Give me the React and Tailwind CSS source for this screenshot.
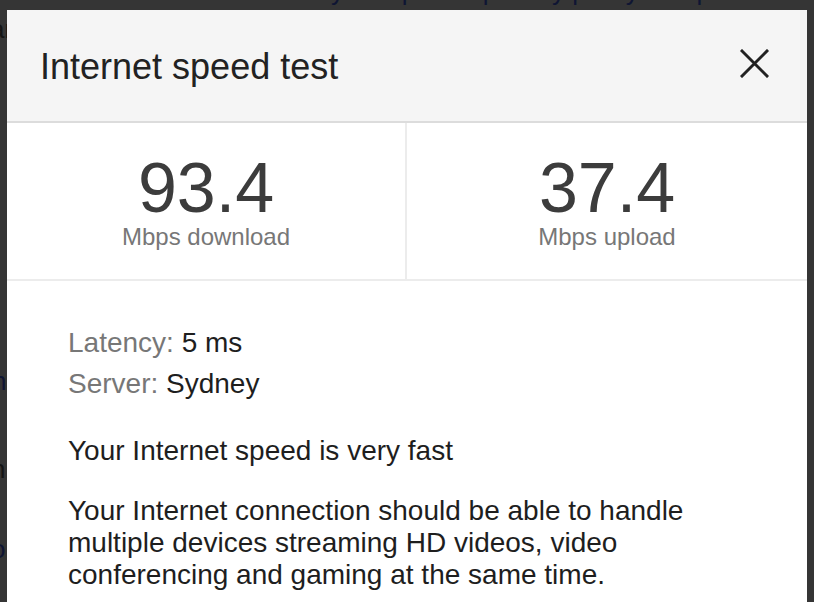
import { useState } from "react";

const SPEEDS = [
  { value: "93.4", label: "Mbps download" },
  { value: "37.4", label: "Mbps upload" },
];

function CloseIcon() {
  return (
    <svg width="29" height="29" viewBox="0 0 29 29" fill="none">
      <path d="M2 2L27 27M27 2L2 27" stroke="#222" strokeWidth="3" strokeLinecap="square" />
    </svg>
  );
}

export default function App() {
  const [open, setOpen] = useState(true);

  return (
    <div
      className="relative h-[602px] w-[814px] overflow-hidden bg-[#353535]"
      style={{ fontFamily: '"Liberation Sans", Arial, sans-serif' }}
    >
      {/* page behind the overlay */}
      <div className="flex flex-col text-[26px] leading-[38px] text-[#141414]">
        <div className="-mt-[28px] pl-[250px] text-[#0f1533]">
          Check your speed · privacy policy · help
        </div>
        <div className="-ml-[10px] whitespace-nowrap">
          an internet speed test measures the connection between your device
        </div>
        <div className="-ml-[14px] whitespace-nowrap">e</div>
        <div className="mt-[276px] flex items-center justify-between">
          <span className="-ml-[8px] text-[#0f1533]">n</span>
          <span className="-mr-[16px]">c</span>
        </div>
        <div className="mt-[50px] -ml-[9px]">n</div>
        <div className="mt-[42px] -ml-[9px] text-[#0f1533]">o</div>
      </div>

      {open && (
        <div className="absolute left-[7px] top-[10px] w-[800px] bg-white">
          <div className="flex h-[113px] items-center justify-between border-b-2 border-[#dcdcdc] bg-[#f5f5f5] pl-[33px] pr-[38px]">
            <h1 className="mt-[2px] text-[36px] leading-[40px] text-[#222]">Internet speed test</h1>
            <button onClick={() => setOpen(false)} className="-mt-[4px]">
              <CloseIcon />
            </button>
          </div>

          <div className="grid grid-cols-2 border-b-2 border-[#ececec]">
            {SPEEDS.map((s, i) => (
              <div
                key={s.label}
                className={`flex flex-col items-center pt-[30px] pb-[28px] ${
                  i === 0 ? "border-r-2 border-[#ececec]" : ""
                }`}
              >
                <div className="text-[70px] leading-[70px] text-[#3c3c3c]">{s.value}</div>
                <div className="text-[24px] leading-[28px] text-[#777]">{s.label}</div>
              </div>
            ))}
          </div>

          <div className="px-[61px] pt-[41px] pb-[40px] text-[28px] text-[#1e1e1e]">
            <div className="leading-[41px]">
              <span className="text-[#777]">Latency:</span> 5 ms
            </div>
            <div className="leading-[41px]">
              <span className="text-[#777]">Server:</span> Sydney
            </div>
            <p className="mt-[31px] leading-[32px]">Your Internet speed is very fast</p>
            <p className="mt-[28px] leading-[32px]">
              Your Internet connection should be able to handle multiple devices streaming HD videos,
              video conferencing and gaming at the same time.
            </p>
          </div>
        </div>
      )}
    </div>
  );
}
